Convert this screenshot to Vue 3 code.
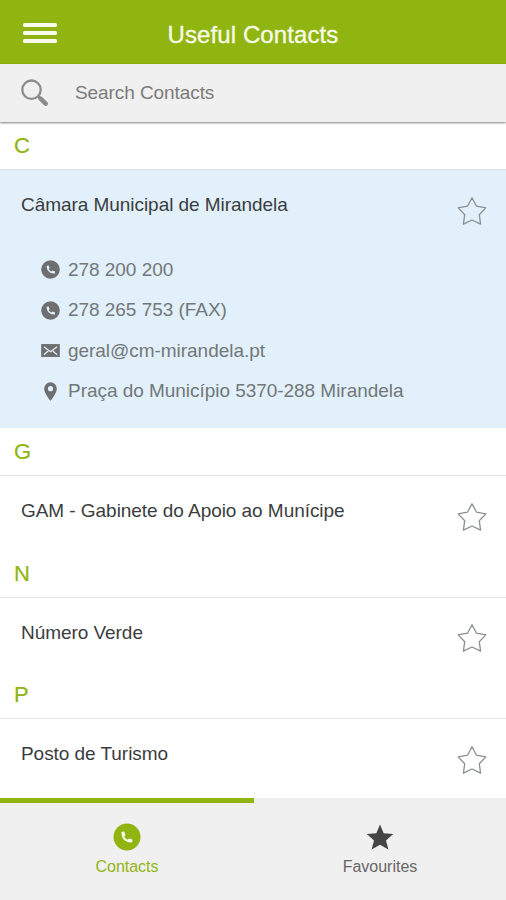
<script setup>
import { ref } from 'vue'

const active = ref('contacts')
const groups = [
  {
    letter: 'C',
    name: 'Câmara Municipal de Mirandela',
    details: [
      { icon: 'phone', text: '278 200 200' },
      { icon: 'phone', text: '278 265 753 (FAX)' },
      { icon: 'mail', text: 'geral@cm-mirandela.pt' },
      { icon: 'pin', text: 'Praça do Município 5370-288 Mirandela' },
    ],
  },
  { letter: 'G', name: 'GAM - Gabinete do Apoio ao Munícipe' },
  { letter: 'N', name: 'Número Verde' },
  { letter: 'P', name: 'Posto de Turismo' },
]
</script>

<template>
  <div class="screen">
    <header class="topbar">
      <button class="menu" aria-label="Menu"><i></i><i></i><i></i></button>
      <h1>Useful Contacts</h1>
    </header>

    <div class="search">
      <svg class="magnifier" viewBox="0 0 28 28">
        <circle cx="10.5" cy="10.7" r="9.2" fill="none" stroke="#8c8c8c" stroke-width="2.3" />
        <path d="M16.800 17l2.500 2.500" stroke="#8c8c8c" stroke-width="2.8" />
        <path d="M19.500 19.600l5.200 5" stroke="#8c8c8c" stroke-width="4.600" stroke-linecap="round" />
      </svg>
      <span>Search Contacts</span>
    </div>

    <main class="list">
      <section v-for="g in groups" :key="g.letter" class="group">
        <h2>{{ g.letter }}</h2>
        <article :class="['contact', { open: g.details }]">
          <div class="title">
            <span class="name">{{ g.name }}</span>
            <svg class="star" viewBox="0 0 30 30">
              <path d="M15 1.800L19.500 10.200L28.800 11.900L22.300 18.800L23.600 28.200L15 24L6.400 28.200L7.700 18.800L1.200 11.900L10.500 10.200Z" fill="none" stroke="#8b8f91" stroke-width="1.300" stroke-linejoin="round" />
            </svg>
          </div>
          <ul v-if="g.details" class="details">
            <li v-for="d in g.details" :key="d.text">
              <svg v-if="d.icon === 'phone'" viewBox="0 0 20 20">
                <circle cx="10" cy="10" r="9.800" fill="#6e6f70" />
                <path d="M6 6.300l1.800-.8 1.300 2.900-1 1.100c.6 1.200 1.500 2 2.700 2.500l1.100-1 2.800 1v2.100c-4.800.8-9-3-8.700-7.800z" fill="#e1f0fa" />
              </svg>
              <svg v-else-if="d.icon === 'mail'" viewBox="0 0 20 20">
                <rect x=".2" y="3.200" width="19.600" height="13.600" fill="#6e6f70" />
                <path d="M3 6l7 5.200L17 6M3 14.500l4.600-4M17 14.500l-4.600-4" fill="none" stroke="#e1f0fa" stroke-width="1.300" />
              </svg>
              <svg v-else viewBox="0 0 20 20">
                <path d="M10 .3a6.700 6.700 0 0 0-6.700 6.700C3.300 11.800 10 19.800 10 19.800S16.700 11.800 16.700 7A6.700 6.700 0 0 0 10 .3zm0 4a2.700 2.700 0 1 1 0 5.400 2.700 2.700 0 0 1 0-5.400z" fill="#6e6f70" />
              </svg>
              <span>{{ d.text }}</span>
            </li>
          </ul>
        </article>
      </section>
    </main>

    <nav class="tabs">
      <button :class="{ active: active === 'contacts' }" @click="active = 'contacts'">
        <svg viewBox="0 0 28 28">
          <circle cx="14" cy="14" r="13.500" fill="#90b510" />
          <path d="M8.500 9l2.500-.8 1.600 3.800-1.400 1.500c.8 1.500 1.800 2.500 3.300 3.200l1.600-1.300 3.300 1v2.900c-6.500 1-11.600-3.900-10.900-10.300z" fill="#f7faef" />
        </svg>
        <span>Contacts</span>
      </button>
      <button :class="{ active: active === 'favourites' }" @click="active = 'favourites'">
        <svg viewBox="0 0 28 28">
          <path d="M14 1.400l3.700 8.800 9.500.9-7.200 6.300 2.400 9.200L14 21.700l-8.400 4.900L8 17.400.8 11.100l9.500-.9z" fill="#444" />
        </svg>
        <span>Favourites</span>
      </button>
    </nav>
  </div>
</template>

<style>
body { margin: 0; background: #fff; }
</style>

<style scoped>
.screen {
  width: 506px;
  height: 900px;
  display: flex;
  flex-direction: column;
  overflow: hidden;
  background: #fff;
  font-family: "Liberation Sans", Arial, sans-serif;
}
button { border: 0; padding: 0; background: none; font: inherit; }
.topbar {
  box-sizing: border-box;
  flex: 0 0 64px;
  display: grid;
  grid-template-columns: 57px 1fr 57px;
  align-items: center;
  background: #90b510;
}
.menu { display: flex; flex-direction: column; gap: 4.300px; margin-left: 23px; padding-top: 2px; }
.menu i { width: 34px; height: 4px; border-radius: 1.500px; background: #f8fbea; }
h1 {
  margin: 0;
  padding-top: 6px;
  color: #f8fbea;
  font-size: 24px;
  font-weight: 400;
  line-height: 30px;
  text-align: center;
  letter-spacing: .1px;
  -webkit-text-stroke: .3px #f8fbea;
}
.search {
  flex: 0 0 58px;
  display: flex;
  align-items: center;
  gap: 26px;
  padding-left: 21px;
  background: #f0f0f0;
  box-shadow: 0 1px 2px rgba(0, 0, 0, .5);
  z-index: 1;
}
.magnifier { width: 28px; height: 28px; }
.search span { color: #7b7b7b; font-size: 19px; line-height: 24px; letter-spacing: -.08px; }
.list { flex: 1; min-height: 0; overflow: hidden; }
h2 {
  box-sizing: border-box;
  height: 48px;
  margin: 0;
  padding: 12px 14px 0;
  border-bottom: 1px solid #e3e3e3;
  color: #90b510;
  font-size: 22px;
  font-weight: 400;
  line-height: 24px;
  -webkit-text-stroke: .2px #90b510;
}
.contact { box-sizing: border-box; height: 73.400px; padding: 0 19px 0 21px; }
.contact.open { height: 258.300px; background: #e1f0fa; }
.title { display: flex; justify-content: space-between; padding-top: 23px; }
.name { color: #3b3d3e; font-size: 19px; line-height: 24px; letter-spacing: -.05px; }
.star { width: 30px; height: 30px; margin-top: 2.500px; }
.details { margin: 24px 0 0 20px; padding: 0; list-style: none; }
.details li { display: flex; align-items: center; gap: 8px; height: 40.500px; color: #727779; font-size: 19px; line-height: 24px; letter-spacing: -.04px; }
.details svg { width: 19px; height: 19px; }
.tabs {
  flex: 0 0 102px;
  display: grid;
  grid-template-columns: 254px 252px;
  background: #f0f0f0;
}
.tabs button {
  display: flex;
  flex-direction: column;
  align-items: center;
  border-top: 5px solid transparent;
  padding-top: 20px;
  color: #666;
  font-size: 16px;
  line-height: 20px;
}
.tabs button.active { border-color: #90b510; color: #90b510; }
.tabs svg { width: 28px; height: 28px; margin-bottom: 6px; }
</style>
